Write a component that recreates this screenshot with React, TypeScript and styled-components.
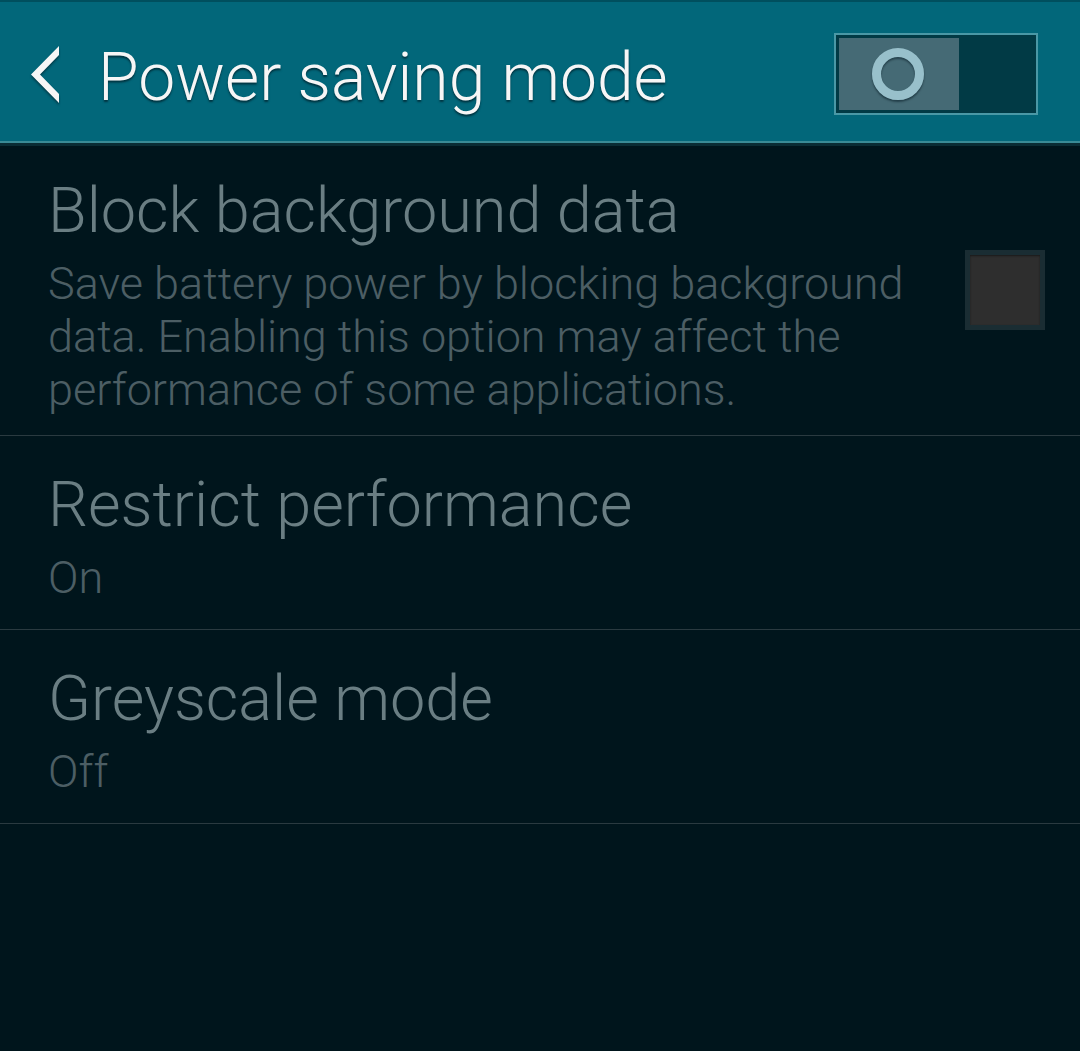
import { createGlobalStyle, styled } from 'styled-components';

const GlobalStyle = createGlobalStyle`
  html, body {
    margin: 0;
    padding: 0;
    background: #00151c;
  }
  body {
    font-family: Roboto, "Noto Sans", "Liberation Sans", sans-serif;
    -webkit-font-smoothing: antialiased;
  }
`;

const Screen = styled.div`
  width: 1080px;
  height: 1051px;
  background: #00151c;
  overflow: hidden;
`;

const ActionBar = styled.header`
  display: flex;
  align-items: center;
  height: 139px;
  border-top: 2px solid #004f5e;
  border-bottom: 2px solid #3a8b96;
  background: #02677a;
  box-sizing: content-box;
`;

const BackButton = styled.button`
  display: flex;
  align-items: center;
  justify-content: center;
  width: 31px;
  height: 60px;
  margin: 6px 0 0 29px;
  padding: 0;
  border: none;
  background: none;
  filter: drop-shadow(0 2px 1px rgba(0, 30, 40, 0.6));
`;

const Title = styled.h1`
  flex: 1;
  margin: 12px 0 0 38px;
  font-size: 66px;
  font-weight: 300;
  line-height: 1;
  color: #f6f6f6;
  text-shadow: 0 2px 2px rgba(0, 30, 40, 0.7);
  white-space: nowrap;
`;

const Switch = styled.div`
  display: flex;
  width: 204px;
  height: 82px;
  margin: 5px 42px 0 0;
  padding: 3px;
  box-sizing: border-box;
  border: 2px solid #4a98a6;
  background: #013a45;
`;

const Thumb = styled.div`
  display: flex;
  align-items: center;
  justify-content: center;
  width: 120px;
  background: #456a75;
`;

const Ring = styled.div`
  width: 34px;
  height: 34px;
  border: 9px solid #98c0cb;
  border-radius: 50%;
  margin-right: 2px;
  box-shadow: 0 2px 2px rgba(0, 20, 30, 0.5), inset 0 2px 2px rgba(0, 20, 30, 0.45);
`;

const List = styled.ul`
  margin: 0;
  padding: 0;
  list-style: none;
  border-top: 3px solid #0a2c34;
`;

const Row = styled.li<{ $top: number; $bottom: number }>`
  display: flex;
  align-items: center;
  gap: 24px;
  padding: ${(p) => p.$top}px 35px ${(p) => p.$bottom}px 48px;
  border-bottom: 1px solid #2a3a40;
`;

const Texts = styled.div`
  flex: 1;
  min-width: 0;
`;

const ItemTitle = styled.div`
  font-size: 63px;
  font-weight: 300;
  line-height: 76px;
  color: #6a7e83;
  white-space: nowrap;
`;

const ItemSummary = styled.div`
  margin-top: 8px;
  font-size: 45px;
  font-weight: 300;
  line-height: 53px;
  color: #4c5e64;
`;

const CheckBox = styled.div`
  flex: none;
  width: 80px;
  height: 80px;
  margin-bottom: 10px;
  box-sizing: border-box;
  border: 5px solid #1a2d33;
  background: #2e2e2e;
  box-shadow: inset 0 1px 2px rgba(0, 0, 0, 0.45);
`;

function ChevronLeft() {
  return (
    <svg width='30' height='57' viewBox='0 0 30 57'>
      <polygon points='29,0 29,9 10,28.5 29,48 29,57 1,28.5' fill='#f6f6f6' />
    </svg>
  );
}

const items = [
  {
    title: 'Block background data',
    summary:
      'Save battery power by blocking background data. Enabling this option may affect the performance of some applications.',
    checkbox: true,
    top: 27,
    bottom: 19,
  },
  { title: 'Restrict performance', summary: 'On', checkbox: false, top: 31, bottom: 25 },
  { title: 'Greyscale mode', summary: 'Off', checkbox: false, top: 31, bottom: 25 },
];

export default function App() {
  return (
    <Screen>
      <GlobalStyle />
      <ActionBar>
        <BackButton aria-label='Back'>
          <ChevronLeft />
        </BackButton>
        <Title>Power saving mode</Title>
        <Switch role='switch' aria-checked='false'>
          <Thumb>
            <Ring />
          </Thumb>
        </Switch>
      </ActionBar>

      <List>
        {items.map((item) => (
          <Row key={item.title} $top={item.top} $bottom={item.bottom}>
            <Texts>
              <ItemTitle>{item.title}</ItemTitle>
              <ItemSummary>{item.summary}</ItemSummary>
            </Texts>
            {item.checkbox && <CheckBox role='checkbox' aria-checked='false' />}
          </Row>
        ))}
      </List>
    </Screen>
  );
}
